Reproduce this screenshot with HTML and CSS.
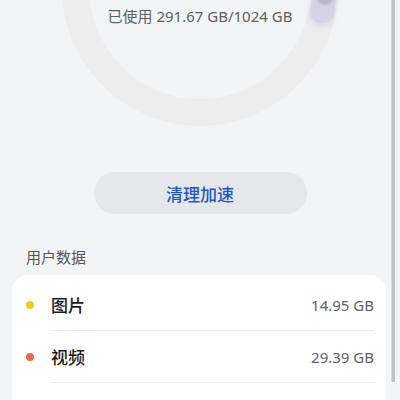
FILE: index.html
```html
<!DOCTYPE html>
<html lang="zh-CN">
<head>
    <meta charset="UTF-8">
    <meta name="viewport" content="width=device-width, initial-scale=1.0">
    <title>存储</title>
    <link rel="stylesheet" href="styles.css">
</head>
<body>
    <div class="hero">
        <svg class="ring" viewBox="0 0 400 150" width="400" height="150">
            <defs>
                <filter id="knobShadow" x="-50%" y="-50%" width="200%" height="200%">
                    <feDropShadow dx="0" dy="2" stdDeviation="3" flood-color="#8a86a0" flood-opacity="0.25"/>
                </filter>
                <filter id="soft">
                    <feGaussianBlur stdDeviation="1.2"/>
                </filter>
            </defs>
            <circle cx="200" cy="-12" r="124.5" fill="none" stroke="#ededee" stroke-width="27"/>
            <path d="M200 -136.5 A124.5 124.5 0 0 1 322.2 11.5" fill="none" stroke="#d6d3e5" stroke-width="24" stroke-linecap="round" filter="url(#knobShadow)"/>
            <ellipse cx="325" cy="0" rx="7.5" ry="5" fill="#bbb7cb" filter="url(#soft)"/>
        </svg>
        <p class="used">已使用 291.67 GB/1024 GB</p>
    </div>

    <button class="cleanBtn">清理加速</button>

    <h4 class="sectionTitle">用户数据</h4>

    <div class="card">
        <div class="row">
            <span class="dot yellow"></span>
            <div class="rowBody">
                <span class="name">图片</span>
                <span class="size">14.95 GB</span>
            </div>
        </div>
        <div class="row">
            <span class="dot orange"></span>
            <div class="rowBody">
                <span class="name">视频</span>
                <span class="size">29.39 GB</span>
            </div>
        </div>
        <div class="row">
            <span class="dot green"></span>
            <div class="rowBody">
                <span class="name">音频</span>
                <span class="size">3.12 GB</span>
            </div>
        </div>
    </div>

    <div class="scrollbar"></div>
</body>
</html>
```

FILE: styles.css
```css
body{
    margin: 0;
    background-color: #f3f4f6;
    font-family: "Noto Sans", "Noto Sans CJK SC", sans-serif;
    overflow: hidden;
}

.hero{
    position: relative;
    height: 150px;
}

.ring{
    position: absolute;
    top: 0;
    left: 0;
}

.used{
    position: relative;
    margin: 0;
    padding-top: 6px;
    text-align: center;
    font-size: 15px;
    line-height: 20px;
    color: #5f5f5f;
}

.cleanBtn{
    display: block;
    width: 213px;
    height: 42px;
    margin: 22px auto 0;
    border: none;
    border-radius: 21px;
    background-color: #e6e7ea;
    color: #1f57c6;
    font-family: "Noto Sans CJK SC", sans-serif;
    font-size: 17px;
    font-weight: 500;
}

.sectionTitle{
    margin: 33px 0 8px;
    padding-left: 26px;
    font-size: 15px;
    line-height: 20px;
    font-weight: normal;
    color: #555;
}

.card{
    margin: 0 14px 0 12px;
    padding-top: 4px;
    background-color: #fff;
    border-radius: 16px 16px 0 0;
}

.row{
    display: flex;
    align-items: center;
    padding: 0 12px 0 14px;
}

.dot{
    width: 8px;
    height: 8px;
    border-radius: 50%;
}

.dot.yellow{
    background-color: #f3cb12;
}

.dot.orange{
    background-color: #ef6a3e;
}

.dot.green{
    background-color: #5bbd6a;
}

.rowBody{
    flex: 1;
    display: flex;
    justify-content: space-between;
    align-items: center;
    height: 51px;
    margin-left: 17px;
    border-bottom: 1px solid #ececec;
}

.name{
    font-family: "Noto Sans CJK SC", sans-serif;
    font-size: 17px;
    font-weight: 500;
    color: #1a1a1a;
}

.size{
    font-size: 15px;
    color: #5f5f5f;
}

.scrollbar{
    position: fixed;
    top: 0;
    left: 391px;
    width: 4px;
    height: 382px;
    background-color: #c2c2c2;
    border-left: 1px solid #dadada;
    box-sizing: border-box;
}
```
